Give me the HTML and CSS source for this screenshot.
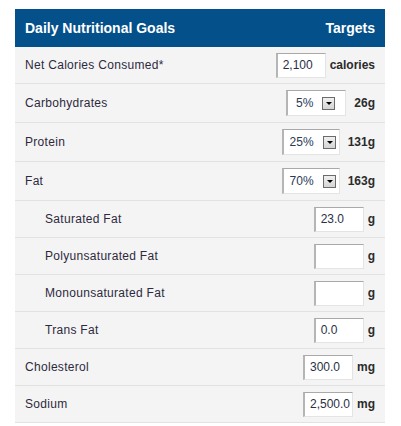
FILE: index.html
```html
<!DOCTYPE html>
<html>
<head>
<meta charset="utf-8">
<link rel="stylesheet" href="styles.css">
</head>
<body>
<div class="goals">
  <div class="head">
    <span>Daily Nutritional Goals</span>
    <span>Targets</span>
  </div>
  <div class="row">
    <span class="label">Net Calories Consumed*</span>
    <div class="target"><span class="field">2,100</span><span class="unit">calories</span></div>
  </div>
  <div class="row tall">
    <span class="label">Carbohydrates</span>
    <div class="target"><span class="select wide"><span class="val">5%</span><span class="arrow"></span></span><span class="unit sel">26g</span></div>
  </div>
  <div class="row tall">
    <span class="label">Protein</span>
    <div class="target"><span class="select"><span class="val">25%</span><span class="arrow"></span></span><span class="unit sel">131g</span></div>
  </div>
  <div class="row tall">
    <span class="label">Fat</span>
    <div class="target"><span class="select"><span class="val">70%</span><span class="arrow"></span></span><span class="unit sel">163g</span></div>
  </div>
  <div class="row sub">
    <span class="label">Saturated Fat</span>
    <div class="target"><span class="field">23.0</span><span class="unit">g</span></div>
  </div>
  <div class="row sub">
    <span class="label">Polyunsaturated Fat</span>
    <div class="target"><span class="field"></span><span class="unit">g</span></div>
  </div>
  <div class="row sub">
    <span class="label">Monounsaturated Fat</span>
    <div class="target"><span class="field"></span><span class="unit">g</span></div>
  </div>
  <div class="row sub">
    <span class="label">Trans Fat</span>
    <div class="target"><span class="field">0.0</span><span class="unit">g</span></div>
  </div>
  <div class="row">
    <span class="label">Cholesterol</span>
    <div class="target"><span class="field">300.0</span><span class="unit">mg</span></div>
  </div>
  <div class="row">
    <span class="label">Sodium</span>
    <div class="target"><span class="field">2,500.0</span><span class="unit">mg</span></div>
  </div>
</div>
</body>
</html>
```
FILE: styles.css
```css
html, body {
  margin: 0;
  padding: 0;
  background: #ffffff;
}
body {
  font-family: "Liberation Sans", Arial, sans-serif;
  color: #333333;
}
.goals {
  width: 370px;
  margin: 9px 0 0 15px;
}
.head {
  height: 38px;
  background: #03508a;
  color: #ffffff;
  font-weight: bold;
  font-size: 14px;
  display: flex;
  align-items: center;
  justify-content: space-between;
  padding: 0 10px;
}
.row {
  height: 36px;
  background: #f4f4f4;
  border-bottom: 1px solid #e2e2e2;
  display: flex;
  align-items: center;
  justify-content: space-between;
  padding: 0 10px;
}
.row.tall {
  height: 38px;
}
.row.sub {
  padding-left: 30px;
}
.label {
  font-size: 12px;
  letter-spacing: 0.3px;
  color: #2e2a3d;
}
.target {
  display: flex;
  align-items: center;
}
.field {
  box-sizing: border-box;
  width: 50px;
  height: 25px;
  background: #ffffff;
  border-style: solid;
  border-width: 1px 1px 1px 2px;
  border-color: #a9a9a9 #e4e4e4 #e4e4e4 #b5b5b5;
  font-size: 12px;
  line-height: 23px;
  padding-left: 5px;
  color: #2a2f45;
}
.unit {
  font-size: 12px;
  font-weight: bold;
  margin-left: 4px;
  color: #2b2b2b;
}
.unit.sel {
  margin-left: 8px;
}
.select {
  box-sizing: border-box;
  width: 58px;
  height: 26px;
  background: #ffffff;
  border-style: solid;
  border-width: 1px 1px 1px 2px;
  border-color: #a9a9a9 #e4e4e4 #e4e4e4 #b5b5b5;
  display: flex;
  align-items: center;
  justify-content: flex-end;
  padding-right: 3px;
}
.select.wide {
  width: 60px;
  padding-right: 10px;
}
.val {
  font-size: 12px;
  color: #2a3a5a;
  margin-right: 9px;
}
.arrow {
  box-sizing: border-box;
  width: 13px;
  height: 13px;
  border: 1px solid #6b6b6b;
  background: linear-gradient(#f0f0f0, #d4d4d4);
  position: relative;
}
.arrow::after {
  content: "";
  position: absolute;
  left: 3px;
  top: 4px;
  border-left: 3px solid transparent;
  border-right: 3px solid transparent;
  border-top: 3px solid #000000;
}
```
